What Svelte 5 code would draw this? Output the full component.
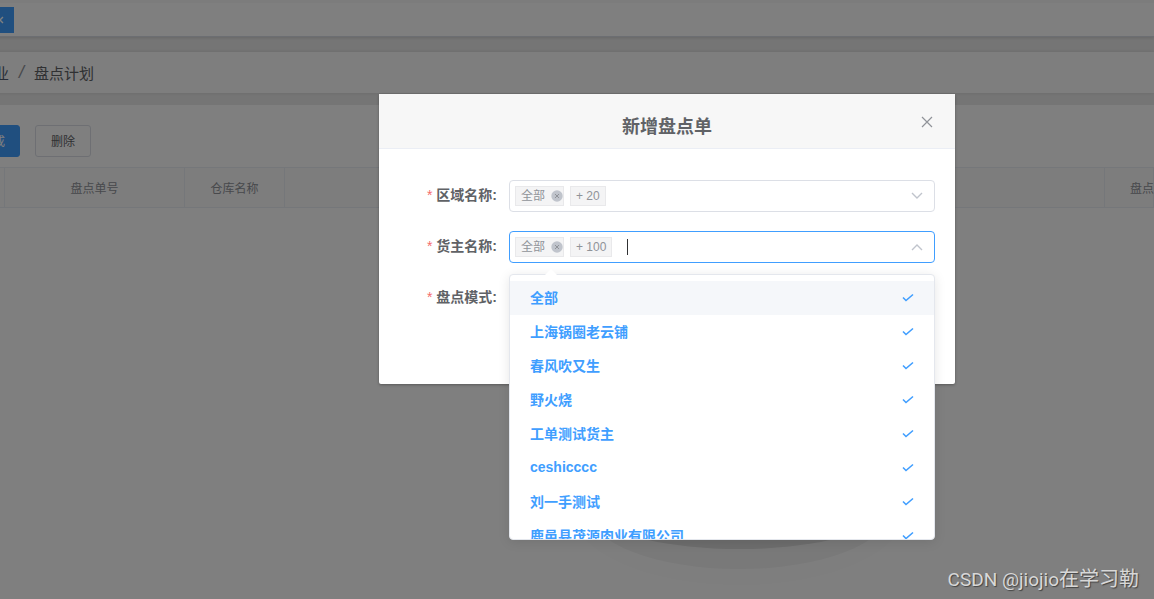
<script>
  const owners = [
    "全部",
    "上海锅圈老云铺",
    "春风吹又生",
    "野火烧",
    "工单测试货主",
    "ceshicccc",
    "刘一手测试",
    "鹿邑县茂源肉业有限公司",
  ];

  let fields = [
    { id: "area", label: "区域名称:", more: "+ 20", open: false },
    { id: "owner", label: "货主名称:", more: "+ 100", open: true },
  ];
</script>

<div class="app">
  <main class="page">
    <div class="tabs">
      <button class="tab" aria-label="close">
        <svg width="10" height="10" viewBox="0 0 10 10"><path d="M2 2l6 6M8 2l-6 6" /></svg>
      </button>
    </div>
    <nav class="breadcrumb">
      <a href="#work">业</a>
      <span class="slash">/</span>
      <span>盘点计划</span>
    </nav>
    <section class="card">
      <div class="toolbar">
        <button class="btn primary">成</button>
        <button class="btn">删除</button>
      </div>
      <table>
        <thead>
          <tr>
            <th class="check"></th>
            <th class="code">盘点单号</th>
            <th class="store">仓库名称</th>
            <th></th>
            <th class="last">盘点</th>
          </tr>
        </thead>
      </table>
      <div class="empty">
        <svg width="340" height="130" viewBox="0 0 340 130">
          <ellipse cx="170" cy="51" rx="168" ry="76" fill="#fcfcfc" />
          <ellipse cx="170" cy="53" rx="150" ry="58" fill="#f2f2f2" />
          <ellipse cx="170" cy="59" rx="130" ry="32" fill="#dadada" />
        </svg>
      </div>
    </section>
  </main>

  <div class="mask">
    <div class="dialog" role="dialog" aria-labelledby="title">
      <header>
        <h2 id="title">新增盘点单</h2>
        <button class="close" aria-label="close">
          <svg width="12" height="12" viewBox="0 0 12 12"><path d="M1 1l10 10M11 1L1 11" /></svg>
        </button>
      </header>
      <form>
        {#each fields as field}
          <div class="row">
            <label for={field.id}><i>*</i>{field.label}</label>
            <div class="select" class:open={field.open}>
              <span class="tag">
                全部
                <svg width="12" height="12" viewBox="0 0 12 12">
                  <circle cx="6" cy="6" r="5.7" fill="#c0c4cc" />
                  <path d="M4 4l4 4M8 4l-4 4" stroke="#909399" />
                </svg>
              </span>
              <span class="tag">{field.more}</span>
              {#if field.open}<span class="caret"></span>{/if}
              <input id={field.id} type="text" />
              <svg class="arrow" width="12" height="8" viewBox="0 0 12 8">
                <path d={field.open ? "M1 7l5-5 5 5" : "M1 1l5 5 5-5"} />
              </svg>
              {#if field.open}
                <div class="dropdown">
                  <ul>
                    {#each owners as owner, i}
                      <li class:hover={i === 0}>
                        {owner}
                        <svg width="12" height="10" viewBox="0 0 12 10"><path d="M1 5.5l3 3 7-6" /></svg>
                      </li>
                    {/each}
                  </ul>
                </div>
              {/if}
            </div>
          </div>
        {/each}
        <div class="row">
          <label for="mode"><i>*</i>盘点模式:</label>
          <select id="mode" class="select"></select>
        </div>
      </form>
    </div>
  </div>

  <p class="watermark"><span>CSDN @jiojio</span>在学习勒</p>
</div>

<style>
  :global(body) {
    margin: 0;
  }
  .app {
    position: relative;
    min-height: 100vh;
    overflow: hidden;
    font-family: "Liberation Sans", "Noto Sans CJK SC", sans-serif;
    font-size: 12px;
    color: #606266;
  }
  button,
  input {
    font-family: inherit;
  }
  .page {
    display: flex;
    flex-direction: column;
    min-height: 100vh;
    margin-left: -8px;
    background: #ebebeb;
  }
  .tabs {
    box-sizing: border-box;
    height: 37px;
    padding-top: 4px;
    border-top: 3px solid #f9f9f9;
    border-bottom: 1px solid #d8dce5;
    background: #fff;
    box-shadow: 0 1px 3px rgba(0, 0, 0, 0.12);
  }
  .tab {
    display: flex;
    align-items: center;
    width: 22px;
    height: 26px;
    padding: 0 3px;
    border: none;
    background: #409eff;
  }
  .tab path {
    fill: none;
    stroke: #fff;
    stroke-width: 1.4;
  }
  .breadcrumb {
    display: flex;
    align-items: center;
    gap: 10px;
    height: 41px;
    margin: 15px 0 12px;
    padding-left: 2px;
    font-size: 15px;
    background: #fcfcfc;
    box-shadow: 0 0 4px rgba(0, 0, 0, 0.1);
  }
  .breadcrumb a {
    color: #515a6e;
    text-decoration: none;
  }
  .slash {
    font-size: 18px;
    font-style: italic;
    color: #909399;
  }
  .card {
    flex: 1;
    background: #fff;
  }
  .toolbar {
    display: flex;
    gap: 15px;
    padding: 20px 0 10px;
  }
  .btn {
    height: 32px;
    padding: 0 15px 2px;
    border: 1px solid #dcdfe6;
    border-radius: 3px;
    font-size: 12px;
    color: #606266;
    background: #fff;
  }
  .primary {
    padding: 0 14px 2px 0;
    border-color: #409eff;
    color: #fff;
    background: #409eff;
  }
  table {
    width: 100%;
    table-layout: fixed;
    border-collapse: collapse;
    color: #909399;
  }
  th {
    box-sizing: border-box;
    height: 40px;
    padding: 0;
    border: 1px solid #ebeef5;
    font-weight: 400;
    background: #fafafa;
  }
  .check {
    width: 12px;
  }
  .code {
    width: 180px;
  }
  .store {
    width: 100px;
  }
  .last {
    width: 49px;
    padding-left: 25px;
    text-align: left;
    white-space: nowrap;
  }
  .empty {
    display: flex;
    justify-content: center;
    padding: 250px 0 0 332px;
  }
  .mask {
    position: absolute;
    inset: 0;
    display: flex;
    justify-content: center;
    align-items: flex-start;
    padding: 94px 0 0 180px;
    background: rgba(0, 0, 0, 0.5);
  }
  .dialog {
    width: 50vw;
    max-width: 576px;
    border-radius: 2px;
    background: #fff;
    box-shadow: 0 1px 3px rgba(0, 0, 0, 0.3);
  }
  header {
    display: flex;
    align-items: center;
    padding: 20px 20px 8px 52px;
    border-bottom: 1px solid #ebeef5;
    background: #f7f7f7;
  }
  h2 {
    flex: 1;
    margin: 0;
    font-size: 18px;
    line-height: 26px;
    text-align: center;
  }
  .close {
    display: flex;
    align-self: flex-start;
    justify-content: flex-end;
    width: 32px;
    padding: 2px;
    border: none;
    background: none;
  }
  .close path {
    fill: none;
    stroke: #909399;
    stroke-width: 1.2;
  }
  form {
    display: flex;
    flex-direction: column;
    gap: 19px;
    padding: 31px 20px 70px;
  }
  .row {
    display: flex;
    align-items: flex-start;
    gap: 12px;
  }
  label {
    width: 98px;
    font-size: 14px;
    font-weight: 700;
    line-height: 30px;
    text-align: right;
  }
  label i {
    margin-right: 4px;
    font-style: normal;
    font-weight: 400;
    color: #f56c6c;
  }
  .select {
    position: relative;
    display: flex;
    flex: 1;
    align-items: center;
    gap: 6px;
    box-sizing: border-box;
    height: 32px;
    padding: 0 11px 0 5px;
    border: 1px solid #dcdfe6;
    border-radius: 4px;
    background: #fff;
  }
  .select.open {
    border-color: #409eff;
  }
  .tag {
    display: flex;
    align-items: center;
    gap: 6px;
    box-sizing: border-box;
    height: 20px;
    padding: 0 5px;
    border: 1px solid #e9e9eb;
    line-height: 20px;
    color: #909399;
    background: #f4f4f5;
  }
  .tag:first-child {
    padding-right: 0;
  }
  .tag path {
    fill: none;
  }
  .caret {
    width: 1px;
    height: 16px;
    margin-left: 9px;
    background: #303133;
  }
  input {
    flex: 1;
    min-width: 0;
    border: none;
    outline: none;
    background: none;
  }
  .arrow path {
    fill: none;
    stroke: #c0c4cc;
    stroke-width: 1.4;
  }
  .dropdown {
    position: absolute;
    z-index: 1;
    top: 42px;
    left: -1px;
    right: -1px;
    border: 1px solid #e4e7ed;
    border-radius: 4px;
    background: #fff;
    box-shadow: 0 2px 12px rgba(0, 0, 0, 0.1);
  }
  .dropdown::before {
    content: "";
    position: absolute;
    top: -6px;
    left: 35px;
    border: 6px solid transparent;
    border-top: none;
    border-bottom-color: #fff;
  }
  ul {
    height: 258px;
    margin: 0;
    padding: 6px 0 0;
    overflow: hidden;
    list-style: none;
  }
  li {
    display: flex;
    align-items: center;
    justify-content: space-between;
    box-sizing: border-box;
    height: 34px;
    padding: 0 20px 2px;
    font-size: 14px;
    font-weight: 700;
    color: #409eff;
  }
  li path {
    fill: none;
    stroke: #409eff;
    stroke-width: 1.6;
  }
  .hover {
    background: #f5f7fa;
  }
  .watermark {
    position: absolute;
    right: 15px;
    bottom: 7px;
    margin: 0;
    font-size: 20px;
    color: #d8d8d8;
    text-shadow: 1px 1px 1px #444;
  }
  .watermark span {
    font-family: Roboto, sans-serif;
    font-size: 19px;
  }
</style>
